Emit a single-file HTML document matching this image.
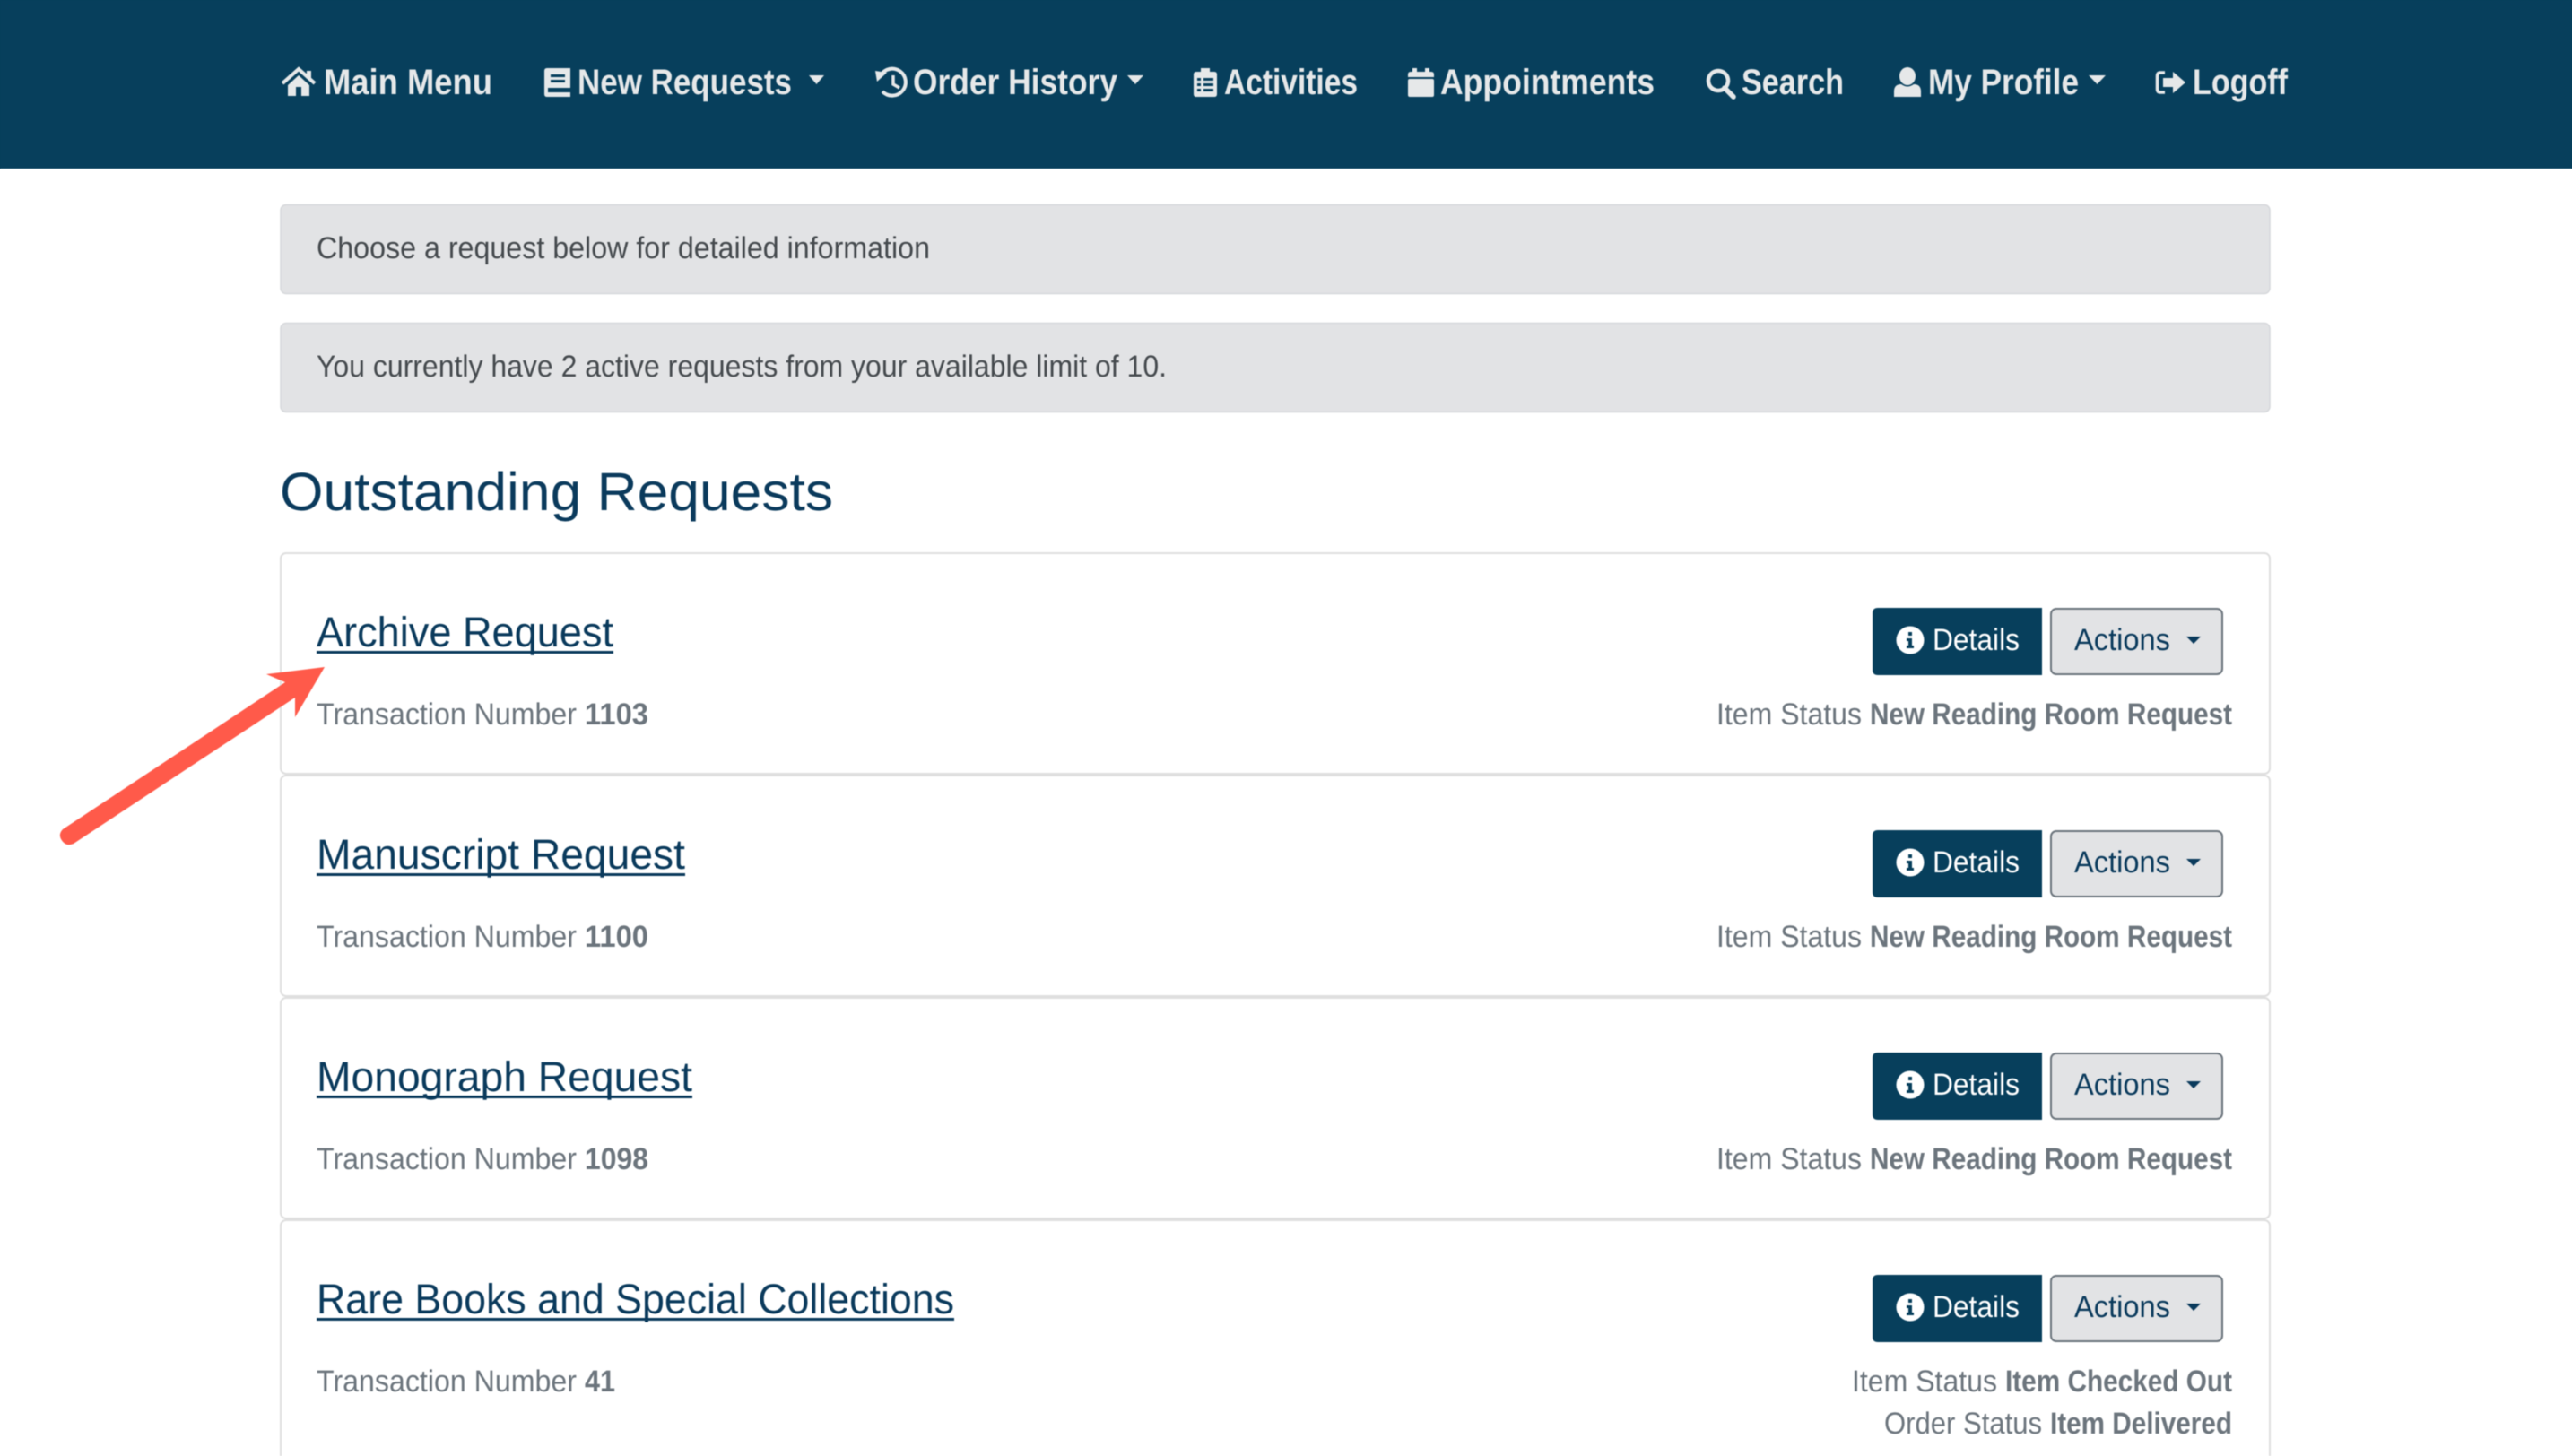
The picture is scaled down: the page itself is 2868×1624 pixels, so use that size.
<!DOCTYPE html>
<html lang="en">
<head>
<meta charset="utf-8">
<title>Outstanding Requests</title>
<style>
html,body{margin:0;padding:0;background:#fff;width:2868px;height:1624px;overflow:hidden}
.bar{position:absolute;left:0;top:0;width:2868px;height:188px;background:#073f5c}
svg{display:block;position:absolute;left:0;top:0;filter:blur(.6px)}
text{font-family:"Liberation Sans",Arial,sans-serif;text-rendering:geometricPrecision}
.nav{font-size:40px;font-weight:700;fill:#e6e8e9}
.alert{font-size:34px;fill:#454a4e}
.h{font-size:60px;fill:#0a3a5c}
.title{font-size:47px;fill:#0a3a5c}
.mut{font-size:34px;fill:#6c757d}
.b{font-size:34px;font-weight:700;fill:#6c757d}
.btn{font-size:34px;fill:#fff}
.act{font-size:34px;fill:#0a3a5c}
</style>
</head>
<body>
<div class="bar"></div>
<svg xmlns="http://www.w3.org/2000/svg" width="2868" height="1624" viewBox="0 0 2868 1624">
<rect width="2868" height="1624" fill="#fff"/>
<rect width="2868" height="188" fill="#073f5c"/>

<g fill="#e6e8e9">
<!-- home -->
<path d="M315 93L333 77L351 93" fill="none" stroke="#e6e8e9" stroke-width="4"/>
<rect x="342" y="79" width="5" height="9"/>
<path d="M321 95L333 84L345 95V107H336V97H330V107H321Z"/>
<!-- book -->
<path d="M610 76H636V108H610Q607 108 607 105V79Q607 76 610 76Z"/>
<path d="M614 83H630V86H614ZM614 89H630V92H614ZM611 98H636V103H611Z" fill="#073f5c"/>
<!-- history -->
<path d="M982 84A15 15 0 1 1 984 102" fill="none" stroke="#e6e8e9" stroke-width="4"/>
<path d="M976 79L989 81L978 91Z"/>
<path d="M996 84V94L1003 98" fill="none" stroke="#e6e8e9" stroke-width="3.5"/>
<!-- activities -->
<path d="M1334 80H1339V76H1349V80H1354Q1357 80 1357 83V105Q1357 108 1354 108H1334Q1331 108 1331 105V83Q1331 80 1334 80Z"/>
<path d="M1335 87H1339V90H1335ZM1342 87H1353V90H1342ZM1335 93H1339V96H1335ZM1342 93H1353V96H1342ZM1335 99H1339V102H1335ZM1342 99H1353V102H1342Z" fill="#073f5c"/>
<!-- calendar -->
<rect x="1570" y="88" width="29" height="20" rx="2"/>
<path d="M1573 80H1575V76H1580V80H1589V76H1594V80H1596Q1599 80 1599 83V86H1570V83Q1570 80 1573 80Z"/>
<!-- search -->
<circle cx="1916" cy="90" r="11" fill="none" stroke="#e6e8e9" stroke-width="4.5"/>
<path d="M1923 98L1933 108" fill="none" stroke="#e6e8e9" stroke-width="5.5" stroke-linecap="round"/>
<!-- user -->
<ellipse cx="2127" cy="85" rx="9" ry="10"/>
<path d="M2112 108V102Q2112 94 2120 94Q2127 99 2134 94Q2142 94 2142 102V108Z"/>
<!-- logoff -->
<path d="M2414 81H2409Q2405.500 81 2405.500 85V99Q2405.500 103 2409 103H2414" fill="none" stroke="#e6e8e9" stroke-width="3.500"/>
<path d="M2412 87H2423V80L2437 92L2423 104V97H2412Z"/>
<!-- carets -->
<path d="M902 84H919L910.500 94ZM1257 84H1275L1266 94ZM2329 84H2348L2338.500 94Z"/>
</g>

<text class="nav" x="361" y="105" textLength="188" lengthAdjust="spacingAndGlyphs">Main Menu</text>
<text class="nav" x="644" y="105" textLength="239" lengthAdjust="spacingAndGlyphs">New Requests</text>
<text class="nav" x="1018" y="105" textLength="228" lengthAdjust="spacingAndGlyphs">Order History</text>
<text class="nav" x="1365" y="105" textLength="149" lengthAdjust="spacingAndGlyphs">Activities</text>
<text class="nav" x="1606" y="105" textLength="239" lengthAdjust="spacingAndGlyphs">Appointments</text>
<text class="nav" x="1942" y="105" textLength="114" lengthAdjust="spacingAndGlyphs">Search</text>
<text class="nav" x="2150" y="105" textLength="168" lengthAdjust="spacingAndGlyphs">My Profile</text>
<text class="nav" x="2445" y="105" textLength="106" lengthAdjust="spacingAndGlyphs">Logoff</text>

<!-- alerts -->
<rect x="313" y="228.500" width="2218" height="99" rx="6" fill="#e2e3e5" stroke="#d6d8db" stroke-width="1.500"/>
<rect x="313" y="360.500" width="2218" height="99" rx="6" fill="#e2e3e5" stroke="#d6d8db" stroke-width="1.500"/>
<text class="alert" x="353" y="288" textLength="684" lengthAdjust="spacingAndGlyphs">Choose a request below for detailed information</text>
<text class="alert" x="353" y="420" textLength="948" lengthAdjust="spacingAndGlyphs">You currently have 2 active requests from your available limit of 10.</text>

<text class="h" x="312" y="569" textLength="617" lengthAdjust="spacingAndGlyphs">Outstanding Requests</text>

<!-- card frames -->
<g fill="#fff" stroke="#dfdfdf" stroke-width="2">
<rect x="313" y="617" width="2218" height="246" rx="6"/>
<rect x="313" y="865" width="2218" height="246" rx="6"/>
<rect x="313" y="1113" width="2218" height="246" rx="6"/>
<rect x="313" y="1361" width="2218" height="300" rx="6"/>
</g>
<g fill="#dfdfdf">
<rect x="318" y="862" width="2208" height="2"/>
<rect x="318" y="1110" width="2208" height="2"/>
<rect x="318" y="1358" width="2208" height="2"/>
</g>

<!-- card titles -->
<text class="title" x="353" y="721" textLength="331" lengthAdjust="spacingAndGlyphs">Archive Request</text>
<text class="title" x="353" y="969" textLength="411" lengthAdjust="spacingAndGlyphs">Manuscript Request</text>
<text class="title" x="353" y="1217" textLength="419" lengthAdjust="spacingAndGlyphs">Monograph Request</text>
<text class="title" x="353" y="1465" textLength="711" lengthAdjust="spacingAndGlyphs">Rare Books and Special Collections</text>
<g fill="#0a3a5c">
<rect x="353" y="726" width="331" height="3"/>
<rect x="353" y="974" width="411" height="3"/>
<rect x="353" y="1222" width="419" height="3"/>
<rect x="353" y="1470" width="711" height="3"/>
</g>

<!-- transaction -->
<text class="mut" x="353" y="808" textLength="290" lengthAdjust="spacingAndGlyphs">Transaction Number</text>
<text class="b" x="652" y="808" textLength="71" lengthAdjust="spacingAndGlyphs">1103</text>
<text class="mut" x="353" y="1056" textLength="290" lengthAdjust="spacingAndGlyphs">Transaction Number</text>
<text class="b" x="652" y="1056" textLength="71" lengthAdjust="spacingAndGlyphs">1100</text>
<text class="mut" x="353" y="1304" textLength="290" lengthAdjust="spacingAndGlyphs">Transaction Number</text>
<text class="b" x="652" y="1304" textLength="71" lengthAdjust="spacingAndGlyphs">1098</text>
<text class="mut" x="353" y="1552" textLength="290" lengthAdjust="spacingAndGlyphs">Transaction Number</text>
<text class="b" x="652" y="1552" textLength="34" lengthAdjust="spacingAndGlyphs">41</text>

<!-- status -->
<text class="mut" x="1914" y="808" textLength="162" lengthAdjust="spacingAndGlyphs">Item Status</text>
<text class="b" x="2085" y="808" textLength="404" lengthAdjust="spacingAndGlyphs">New Reading Room Request</text>
<text class="mut" x="1914" y="1056" textLength="162" lengthAdjust="spacingAndGlyphs">Item Status</text>
<text class="b" x="2085" y="1056" textLength="404" lengthAdjust="spacingAndGlyphs">New Reading Room Request</text>
<text class="mut" x="1914" y="1304" textLength="162" lengthAdjust="spacingAndGlyphs">Item Status</text>
<text class="b" x="2085" y="1304" textLength="404" lengthAdjust="spacingAndGlyphs">New Reading Room Request</text>
<text class="mut" x="2065" y="1552" textLength="162" lengthAdjust="spacingAndGlyphs">Item Status</text>
<text class="b" x="2236" y="1552" textLength="253" lengthAdjust="spacingAndGlyphs">Item Checked Out</text>
<text class="mut" x="2101" y="1599" textLength="176" lengthAdjust="spacingAndGlyphs">Order Status</text>
<text class="b" x="2286" y="1599" textLength="203" lengthAdjust="spacingAndGlyphs">Item Delivered</text>

<!-- buttons -->
<g>
<path d="M2094 678H2277V753H2094Q2088 753 2088 747V684Q2088 678 2094 678Z" fill="#073f5c"/>
<rect x="2287" y="679" width="191" height="73" rx="6" fill="#e2e3e5" stroke="#6c757d" stroke-width="2"/>
<circle cx="2130" cy="714" r="15.500" fill="#fff"/>
<path d="M2128 705h4v4h-4zM2126 712h6v8h2v3h-8v-3h2v-5h-2z" fill="#073f5c"/>
<text class="btn" x="2155" y="725" textLength="97" lengthAdjust="spacingAndGlyphs">Details</text>
<text class="act" x="2313" y="725" textLength="107" lengthAdjust="spacingAndGlyphs">Actions</text>
<path d="M2438 710H2454L2446 718Z" fill="#0a3a5c"/>
</g>
<g>
<path d="M2094 926H2277V1001H2094Q2088 1001 2088 995V932Q2088 926 2094 926Z" fill="#073f5c"/>
<rect x="2287" y="927" width="191" height="73" rx="6" fill="#e2e3e5" stroke="#6c757d" stroke-width="2"/>
<circle cx="2130" cy="962" r="15.500" fill="#fff"/>
<path d="M2128 953h4v4h-4zM2126 960h6v8h2v3h-8v-3h2v-5h-2z" fill="#073f5c"/>
<text class="btn" x="2155" y="973" textLength="97" lengthAdjust="spacingAndGlyphs">Details</text>
<text class="act" x="2313" y="973" textLength="107" lengthAdjust="spacingAndGlyphs">Actions</text>
<path d="M2438 958H2454L2446 966Z" fill="#0a3a5c"/>
</g>
<g>
<path d="M2094 1174H2277V1249H2094Q2088 1249 2088 1243V1180Q2088 1174 2094 1174Z" fill="#073f5c"/>
<rect x="2287" y="1175" width="191" height="73" rx="6" fill="#e2e3e5" stroke="#6c757d" stroke-width="2"/>
<circle cx="2130" cy="1210" r="15.500" fill="#fff"/>
<path d="M2128 1201h4v4h-4zM2126 1208h6v8h2v3h-8v-3h2v-5h-2z" fill="#073f5c"/>
<text class="btn" x="2155" y="1221" textLength="97" lengthAdjust="spacingAndGlyphs">Details</text>
<text class="act" x="2313" y="1221" textLength="107" lengthAdjust="spacingAndGlyphs">Actions</text>
<path d="M2438 1206H2454L2446 1214Z" fill="#0a3a5c"/>
</g>
<g>
<path d="M2094 1422H2277V1497H2094Q2088 1497 2088 1491V1428Q2088 1422 2094 1422Z" fill="#073f5c"/>
<rect x="2287" y="1423" width="191" height="73" rx="6" fill="#e2e3e5" stroke="#6c757d" stroke-width="2"/>
<circle cx="2130" cy="1458" r="15.500" fill="#fff"/>
<path d="M2128 1449h4v4h-4zM2126 1456h6v8h2v3h-8v-3h2v-5h-2z" fill="#073f5c"/>
<text class="btn" x="2155" y="1469" textLength="97" lengthAdjust="spacingAndGlyphs">Details</text>
<text class="act" x="2313" y="1469" textLength="107" lengthAdjust="spacingAndGlyphs">Actions</text>
<path d="M2438 1454H2454L2446 1462Z" fill="#0a3a5c"/>
</g>

<!-- arrow -->
<path d="M362 744L297 752L318 761L70 925Q65 930 68 936Q73 945 82 941L329 778V800Z" fill="#ff5a4a"/>
</svg>
</body>
</html>
